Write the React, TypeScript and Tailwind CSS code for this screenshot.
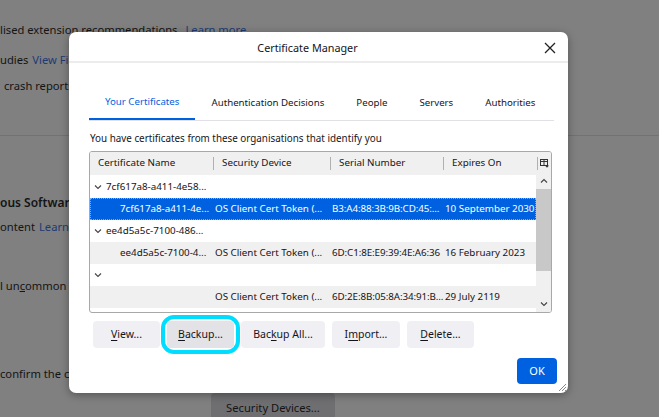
import { useState } from "react";

const font = { fontFamily: '"Noto Sans", "Liberation Sans", sans-serif' };

type Row = {
  kind: "group" | "cert";
  name: string;
  device?: string;
  serial?: string;
  expires?: string;
};

const rows: Row[] = [
  { kind: "group", name: "7cf617a8-a411-4e58..." },
  {
    kind: "cert",
    name: "7cf617a8-a411-4e...",
    device: "OS Client Cert Token (...",
    serial: "B3:A4:88:3B:9B:CD:45:...",
    expires: "10 September 2030",
  },
  { kind: "group", name: "ee4d5a5c-7100-486..." },
  {
    kind: "cert",
    name: "ee4d5a5c-7100-4...",
    device: "OS Client Cert Token (...",
    serial: "6D:C1:8E:E9:39:4E:A6:36",
    expires: "16 February 2023",
  },
  { kind: "group", name: "" },
  {
    kind: "cert",
    name: "",
    device: "OS Client Cert Token (...",
    serial: "6D:2E:8B:05:8A:34:91:B...",
    expires: "29 July 2119",
  },
];

function Chevron({ dir = "down" }: { dir?: "down" | "up" }) {
  return (
    <svg width="8" height="6" viewBox="0 0 8 6" className="shrink-0">
      <path
        d={dir === "down" ? "M1 1.5 L4 4.5 L7 1.5" : "M1 4.5 L4 1.5 L7 4.5"}
        fill="none"
        stroke="#444"
        strokeWidth="1.1"
      />
    </svg>
  );
}

function Key({ children }: { children: string }) {
  return <span className="underline underline-offset-2">{children}</span>;
}

function Background() {
  return (
    <div className="h-[417px] w-[659px] overflow-hidden bg-[#808080] text-[11.2px] text-[#141414]" style={font}>
      <div className="flex h-[136px] flex-col border-b border-[#727272]">
        <div className="mt-[22px] flex gap-[8px] whitespace-nowrap">
          <span>lised extension recommendations</span>
          <span className="text-[#1d3b72]">Learn more</span>
        </div>
        <div className="mt-[13px] flex gap-[4px] whitespace-nowrap">
          <span>udies</span>
          <span className="text-[#1d3b72]">View Firefox Studies</span>
        </div>
        <div className="mt-[9px] pl-[4px] whitespace-nowrap">crash reports</div>
      </div>
      <div className="mt-[58px] whitespace-nowrap text-[12px] font-semibold">ous Software and Dangerous Content</div>
      <div className="mt-[7px] flex gap-[4px] whitespace-nowrap">
        <span>ontent</span>
        <span className="text-[#1d3b72]">Learn more</span>
      </div>
      <div className="mt-[42px] whitespace-nowrap">
        l un<span className="underline">c</span>ommon software
      </div>
      <div className="mt-[71px] whitespace-nowrap">confirm the current validity of certificates</div>
      <div className="ml-[211px] mt-[11px] flex h-[30px] w-[124px] items-center justify-center rounded-[4px] bg-[#6f6f72] whitespace-nowrap">
        Security Devices...
      </div>
    </div>
  );
}

export default function App() {
  const [tab] = useState(0);
  const tabs = ["Your Certificates", "Authentication Decisions", "People", "Servers", "Authorities"];

  return (
    <div className="relative h-[417px] w-[659px] overflow-hidden">
      <Background />
      <div
        className="absolute left-[69px] top-[32px] flex h-[361px] w-[499px] flex-col rounded-[7px] bg-white text-[#15141a] shadow-[0_2px_8px_rgba(0,0,0,0.35)]"
        style={font}
      >
        <div className="relative flex h-[31px] items-center justify-center border-b-2 border-[#ececec] pr-[22px] pt-[3px] text-[10.8px]">
          Certificate Manager
          <svg width="12" height="12" viewBox="0 0 12 12" className="absolute right-[12px] top-[10px]">
            <path d="M1 1 L11 11 M11 1 L1 11" stroke="#222" strokeWidth="1.3" />
          </svg>
        </div>

        <div className="flex flex-col pl-[20px] pr-[14px]">
          <div className="mt-[24px] flex border-b border-[#e0e0e6] text-[9.7px]">
            {tabs.map((t, i) => (
              <div
                key={t}
                className={
                  i === tab
                    ? "-mb-px flex h-[33px] shrink-0 items-center whitespace-nowrap border-b-2 border-[#0061e0] px-[16px] text-[#0061e0]"
                    : "flex h-[33px] shrink-0 items-center whitespace-nowrap px-[16px]"
                }
              >
                {t}
              </div>
            ))}
          </div>

          <div className="mt-[9px] h-[16px] whitespace-nowrap pl-px text-[9.85px] leading-[16px]">
            You have certificates from these organisations that identify you
          </div>

          <div className="mt-[5px] mr-[2px] flex h-[162px] flex-col overflow-hidden rounded-[3px] border border-[#a8a8a8] text-[9.8px]">
            <div className="flex h-[23px] shrink-0 items-center bg-[#f0f0f0] whitespace-nowrap">
              <div className="flex h-full w-[123px] items-center pl-[8px]">Certificate Name</div>
              <div className="h-[13px] w-px bg-[#b0b0b0]" />
              <div className="flex h-full w-[116px] items-center pl-[8px]">Security Device</div>
              <div className="h-[13px] w-px bg-[#b0b0b0]" />
              <div className="flex h-full w-[112px] items-center pl-[8px]">Serial Number</div>
              <div className="h-[13px] w-px bg-[#b0b0b0]" />
              <div className="flex h-full w-[93px] items-center pl-[8px]">Expires On</div>
              <div className="h-[13px] w-px bg-[#b0b0b0]" />
              <div className="flex flex-1 items-center justify-center">
                <svg width="9" height="9" viewBox="0 0 9 9">
                  <rect x="0.5" y="0.5" width="7" height="6" fill="none" stroke="#333" />
                  <path d="M0.5 2.5 H7.5 M4 0.5 V6.5" stroke="#333" />
                  <path d="M5 6.5 L7 8.8 L9 6.5 Z" fill="#333" />
                </svg>
              </div>
            </div>

            <div className="flex min-h-0 flex-1">
              <div className="flex min-w-0 flex-1 flex-col pt-px">
                {rows.map((r, i) => {
                  const selected = i === 1;
                  const stripe = i % 2 === 1;
                  const cls = selected
                    ? "flex h-[22px] shrink-0 items-center overflow-hidden whitespace-nowrap bg-[#0061e0] text-white outline outline-1 -outline-offset-1 outline-dotted outline-[#7aa8ef]"
                    : stripe
                      ? "flex h-[22px] shrink-0 items-center overflow-hidden whitespace-nowrap bg-[#f0f0f0]"
                      : "flex h-[22px] shrink-0 items-center overflow-hidden whitespace-nowrap";
                  if (r.kind === "group") {
                    return (
                      <div key={i} className={cls}>
                        <div className="flex items-center gap-[4px] pl-[4px]">
                          <Chevron />
                          <span>{r.name}</span>
                        </div>
                      </div>
                    );
                  }
                  return (
                    <div key={i} className={cls}>
                      <div className="w-[124px] shrink-0 overflow-hidden pl-[30px]">{r.name}</div>
                      <div className="w-[117px] shrink-0 overflow-hidden pl-px">{r.device}</div>
                      <div className="w-[113px] shrink-0 overflow-hidden pl-px tracking-[-0.1px]">{r.serial}</div>
                      <div className="min-w-0 flex-1 overflow-hidden pl-px">{r.expires}</div>
                    </div>
                  );
                })}
              </div>
              <div className="flex w-[15px] shrink-0 flex-col items-center bg-[#f0f0f0]">
                <div className="flex h-[12px] items-center">
                  <Chevron dir="up" />
                </div>
                <div className="mt-[2px] h-[82px] w-full bg-[#c8c8c8]" />
                <div className="flex-1" />
                <div className="mb-[2px] flex h-[12px] items-center">
                  <Chevron />
                </div>
              </div>
            </div>
          </div>

          <div className="mt-[8px] flex gap-[7px] pl-[4px] text-[10.5px]">
            <button className="h-[27px] w-[67px] rounded-[4px] bg-[#f0f0f4]">
              <Key>V</Key>iew...
            </button>
            <button className="relative h-[27px] w-[67px] rounded-[4px] bg-[#e2e2e7]">
              <Key>B</Key>ackup...
              <span className="absolute -inset-[6px] rounded-[13px] border-[4px] border-[#00ddff]" />
            </button>
            <button className="h-[27px] w-[84px] rounded-[4px] bg-[#f0f0f4]">
              Bac<Key>k</Key>up All...
            </button>
            <button className="h-[27px] w-[68px] rounded-[4px] bg-[#f0f0f4]">
              I<Key>m</Key>port...
            </button>
            <button className="h-[27px] w-[67px] rounded-[4px] bg-[#f0f0f4]">
              <Key>D</Key>elete...
            </button>
          </div>

          <div className="-mr-[3px] mt-[10px] flex justify-end">
            <button className="h-[26px] w-[40px] rounded-[4px] bg-[#0061e0] text-[11px] text-white">OK</button>
          </div>
        </div>
        <svg width="10" height="10" viewBox="0 0 10 10" className="absolute bottom-[1px] right-[1px]">
          <path d="M9 2 L2 9 M9 5 L5 9 M9 8 L8 9" stroke="#888" strokeWidth="1" />
        </svg>
      </div>
    </div>
  );
}
